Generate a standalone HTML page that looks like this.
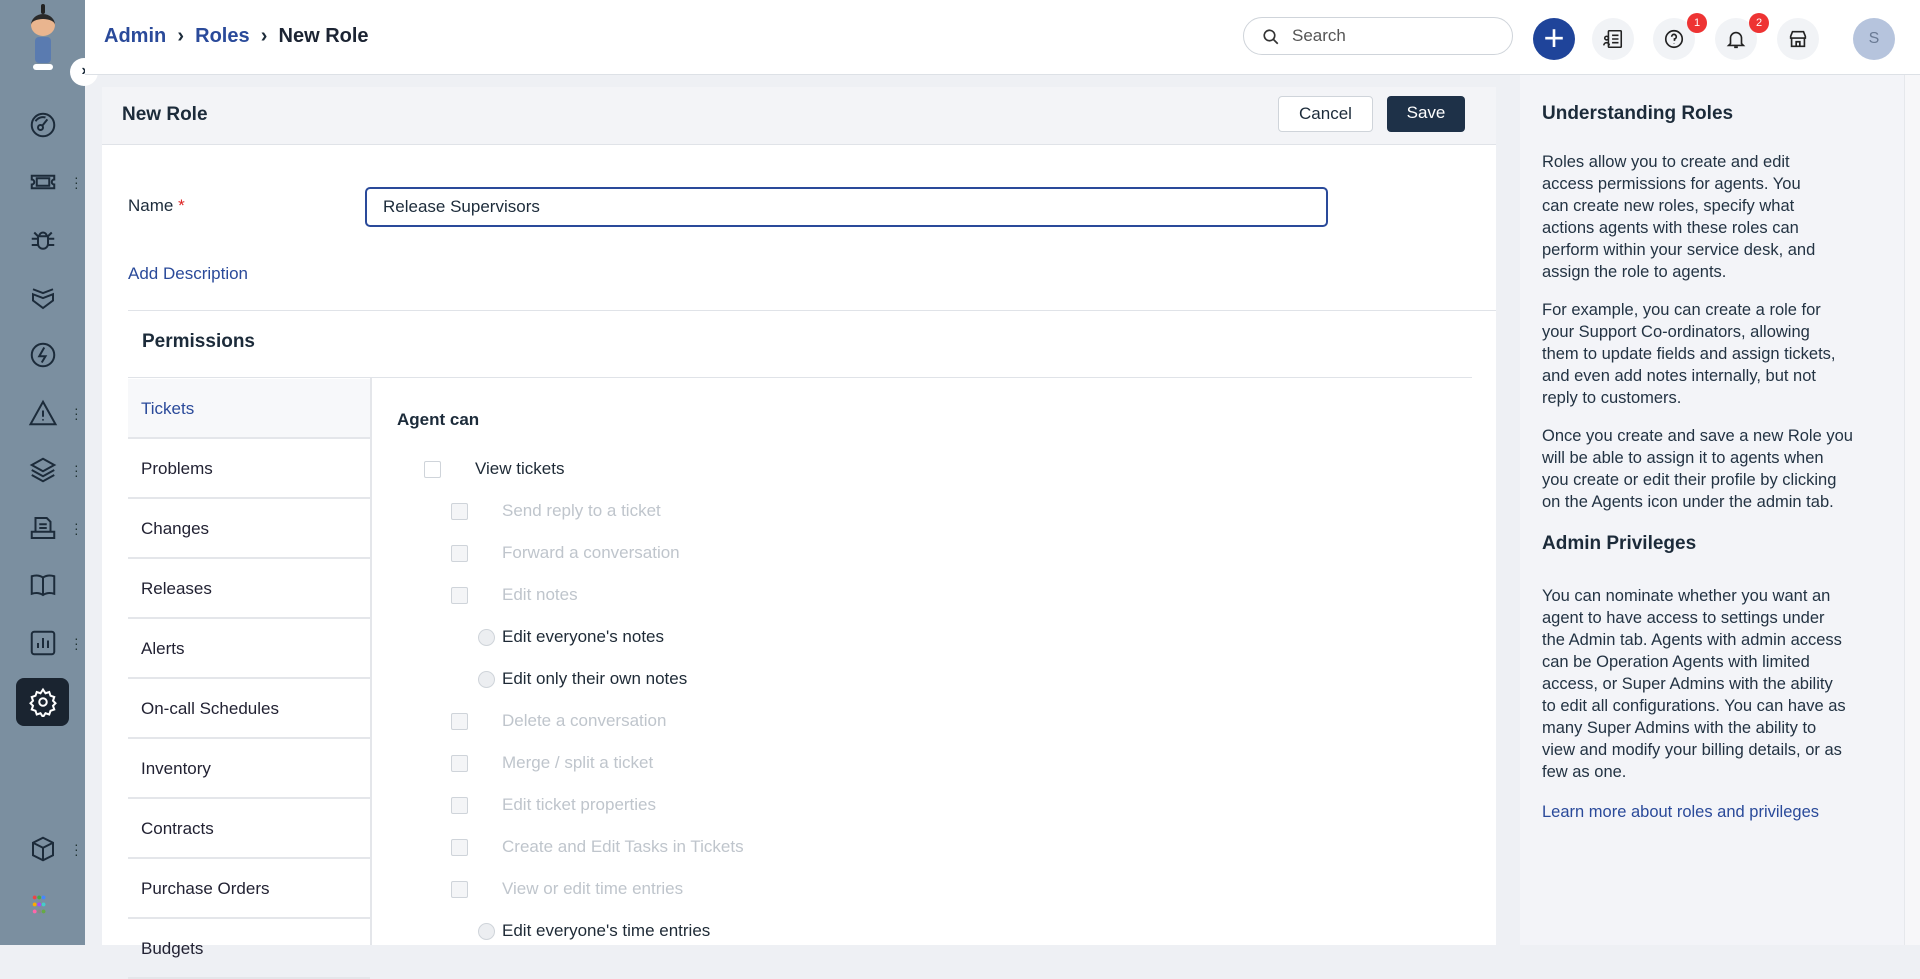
<!DOCTYPE html>
<html style="background:#eef0f4"><head><meta charset="utf-8"><style>
*{margin:0;padding:0;box-sizing:border-box}
body{width:1920px;height:945px;overflow:hidden;font-family:"Liberation Sans",sans-serif;background:#eef0f4;position:relative;color:#1c2b3a}
.a{position:absolute}
.sb{left:0;top:0;width:85px;height:945px;background:#7b8fa0}
.ic{position:absolute;left:28px;width:30px;height:30px}
.dots{position:absolute;left:74px;width:4px;height:16px;font-size:14px;color:#233;line-height:5px}
.hd{left:85px;top:0;width:1835px;height:75px;background:#fff;border-bottom:1px solid #dde1e6}
.card{left:102px;top:87px;width:1394px;height:858px;background:#fff}
.ch{left:0;top:0;width:1394px;height:58px;background:#f3f4f7;border-bottom:1px solid #e0e3e8}
.btn{position:absolute;top:9px;height:36px;border-radius:4px;font-size:17px;line-height:34px;text-align:center}
.rp{left:1520px;top:75px;width:384px;height:870px;background:#f3f4f8}
.rp p{font-size:16.5px;line-height:22px;color:#233343;margin-bottom:16px}
.tab{position:absolute;left:26px;width:242px;height:60px;border-bottom:2px solid #e4e6ea;font-size:17px;line-height:60px;padding-left:13px;color:#223}
.row{position:absolute;font-size:17px;color:#bfc5cc}
.cb{position:absolute;width:17px;height:17px;border:1px solid #cfd4da;border-radius:2px;background:#f4f5f7}
.rd{position:absolute;width:17px;height:17px;border:1px solid #cfd4da;border-radius:50%;background:#eceef1}
.hi{color:#1e2a36}
.cir{position:absolute;top:18px;width:42px;height:42px;border-radius:50%;background:#f1f3f6}
</style></head><body>
<div class="a sb">
 <div class="a" style="left:26px;top:4px;width:34px;height:74px">
  <div style="width:4px;height:10px;background:#222;margin:0 auto;border-radius:2px"></div>
  <div style="width:24px;height:22px;border-radius:50%;background:#e9b58f;margin:0 5px;border-top:5px solid #2a2a2a"></div>
  <div style="width:16px;height:26px;background:#5a7bb0;margin:1px 9px;border-radius:4px"></div>
  <div style="width:20px;height:6px;background:#fff;margin:0 7px;border-radius:3px"></div></div>
 <div class="a" style="left:70px;top:58px;width:28px;height:28px;border-radius:50%;background:#fff;font-size:16px;font-weight:bold;text-align:center;line-height:26px">›</div>
 <svg class="ic" style="top:110px" viewBox="0 0 24 24" fill="none" stroke="#1c2b3a" stroke-width="1.6"><circle cx="12" cy="12" r="9"/><circle cx="10" cy="14" r="2"/><path d="M11.5 12.5l4-5M6 9a7 7 0 0 1 8-3"/></svg>
 <svg class="ic" style="top:167px" viewBox="0 0 24 24" fill="none" stroke="#1c2b3a" stroke-width="1.6"><path d="M3 7h18v3a2 2 0 0 0 0 4v3H3v-3a2 2 0 0 0 0-4z"/><rect x="7" y="9" width="10" height="6"/></svg><div class="dots" style="top:175px">·<br>·<br>·</div>
 <svg class="ic" style="top:225px" viewBox="0 0 24 24" fill="none" stroke="#1c2b3a" stroke-width="1.6"><path d="M8 9h8v6a4 4 0 0 1-8 0zM9 9a3 3 0 0 1 6 0M3 11h5M16 11h5M3 16h5M16 16h5M5 6l3 3M19 6l-3 3"/></svg>
 <svg class="ic" style="top:283px" viewBox="0 0 24 24" fill="none" stroke="#1c2b3a" stroke-width="1.6"><path d="M4 5l8 3 8-3M4 9l8 3 8-3v5l-8 6-8-6z"/></svg>
 <svg class="ic" style="top:340px" viewBox="0 0 24 24" fill="none" stroke="#1c2b3a" stroke-width="1.6"><circle cx="12" cy="12" r="9"/><path d="M13 6l-4 7h5l-3 5"/></svg>
 <svg class="ic" style="top:398px" viewBox="0 0 24 24" fill="none" stroke="#1c2b3a" stroke-width="1.6"><path d="M12 3l10 18H2zM12 10v5M12 17v1"/></svg><div class="dots" style="top:406px">·<br>·<br>·</div>
 <svg class="ic" style="top:455px" viewBox="0 0 24 24" fill="none" stroke="#1c2b3a" stroke-width="1.6"><path d="M12 3l9 5-9 5-9-5zM3 12l9 5 9-5M3 16l9 5 9-5"/></svg><div class="dots" style="top:463px">·<br>·<br>·</div>
 <svg class="ic" style="top:513px" viewBox="0 0 24 24" fill="none" stroke="#1c2b3a" stroke-width="1.6"><path d="M6 4h9l3 3v8H6zM9 9h6M9 12h6M3 15h18v5H3z"/></svg><div class="dots" style="top:521px">·<br>·<br>·</div>
 <svg class="ic" style="top:570px" viewBox="0 0 24 24" fill="none" stroke="#1c2b3a" stroke-width="1.6"><path d="M12 6c-3-2-6-2-9-1v14c3-1 6-1 9 1 3-2 6-2 9-1V5c-3-1-6-1-9 1zM12 6v14"/></svg>
 <svg class="ic" style="top:628px" viewBox="0 0 24 24" fill="none" stroke="#1c2b3a" stroke-width="1.6"><rect x="3" y="3" width="18" height="18" rx="2"/><path d="M8 16v-4M12 16V8M16 16v-6"/></svg><div class="dots" style="top:636px">·<br>·<br>·</div>
 <div class="a" style="left:16px;top:678px;width:53px;height:48px;border-radius:8px;background:#1a2430"></div>
 <svg class="ic" style="top:687px" viewBox="0 0 24 24" fill="none" stroke="#fff" stroke-width="1.6"><circle cx="12" cy="12" r="3"/><path d="M12 2l2 3 3-1 1 3 3 1-1 3 2 2-2 2 1 3-3 1-1 3-3-1-2 3-2-3-3 1-1-3-3-1 1-3-2-2 2-2-1-3 3-1 1-3 3 1z"/></svg>
 <svg class="ic" style="top:834px" viewBox="0 0 24 24" fill="none" stroke="#1c2b3a" stroke-width="1.6"><path d="M12 3l8 4v10l-8 4-8-4V7zM4 7l8 4 8-4M12 11v10"/></svg><div class="dots" style="top:842px">·<br>·<br>·</div>
 <div class="a" style="left:32px;top:894px;width:22px;height:22px;font-size:9px;line-height:7px;letter-spacing:-1px"><span style="color:#e44">●</span><span style="color:#4a4">●</span><span style="color:#48f">●</span><br><span style="color:#fa0">●</span><span style="color:#a4f">●</span><span style="color:#4cc">●</span><br><span style="color:#f6a">●</span><span style="color:#888">●</span><span style="color:#6a4">●</span></div>
</div>
<div class="a hd">
 <div class="a" style="left:19px;top:25px;font-size:20px;font-weight:bold;white-space:nowrap"><span style="color:#2a4a9a">Admin</span>&nbsp; <span style="font-size:20px">›</span>&nbsp; <span style="color:#2a4a9a">Roles</span>&nbsp; <span style="font-size:20px">›</span>&nbsp; <span style="color:#1c2433">New Role</span></div>
 <div class="a" style="left:1158px;top:17px;width:270px;height:38px;border:1px solid #cfd4da;border-radius:19px;font-size:17px;color:#555;line-height:36px;padding-left:48px">Search
  <svg style="position:absolute;left:18px;top:10px" width="18" height="18" viewBox="0 0 24 24" fill="none" stroke="#333" stroke-width="2.2"><circle cx="10" cy="10" r="7"/><path d="M15 15l6 6"/></svg></div>
 <div class="a" style="left:1448px;top:18px;width:42px;height:42px;border-radius:50%;background:#1f449a;color:#fff;font-size:36px;line-height:40px;text-align:center;font-weight:300">+</div>
 <div class="cir" style="left:1507px"><svg style="margin:10px" width="22" height="22" viewBox="0 0 24 24" fill="none" stroke="#222" stroke-width="1.7"><rect x="7" y="3" width="14" height="18" rx="1"/><path d="M11 8h7M11 12h7M11 16h7"/><circle cx="5" cy="11" r="2"/><path d="M2 19a3 3 0 0 1 6 0"/></svg></div>
 <div class="cir" style="left:1568px"><svg style="margin:10px" width="22" height="22" viewBox="0 0 24 24" fill="none" stroke="#222" stroke-width="1.8"><circle cx="12" cy="12" r="9"/><path d="M9.5 9.5a2.5 2.5 0 1 1 3 2.4V14M12 17v.5"/></svg></div>
 <div class="a" style="left:1602px;top:13px;width:20px;height:20px;border-radius:50%;background:#e33;color:#fff;font-size:11px;text-align:center;line-height:20px">1</div>
 <div class="cir" style="left:1630px"><svg style="margin:10px" width="22" height="22" viewBox="0 0 24 24" fill="none" stroke="#222" stroke-width="1.8"><path d="M6 17V11a6 6 0 0 1 12 0v6l2 2H4zM10 21h4"/></svg></div>
 <div class="a" style="left:1664px;top:13px;width:20px;height:20px;border-radius:50%;background:#e33;color:#fff;font-size:11px;text-align:center;line-height:20px">2</div>
 <div class="cir" style="left:1692px"><svg style="margin:10px" width="22" height="22" viewBox="0 0 24 24" fill="none" stroke="#222" stroke-width="1.8"><path d="M4 9l2-5h12l2 5v2H4zM5 11v9h14v-9M10 20v-5h4v5"/></svg></div>
 <div class="a" style="left:1768px;top:18px;width:42px;height:42px;border-radius:50%;background:#b6c4dd;color:#6a7a94;font-size:16px;text-align:center;line-height:42px">S</div>
</div>
<div class="a card">
 <div class="a ch"><div class="a" style="left:20px;top:17px;font-size:19px;font-weight:bold">New Role</div>
  <div class="btn" style="left:1176px;width:95px;background:#fff;border:1px solid #cfd4da">Cancel</div>
  <div class="btn" style="left:1285px;width:78px;background:#1e3148;color:#fff">Save</div></div>
 <div class="a" style="left:26px;top:109px;font-size:17px">Name <span style="color:#d22">*</span></div>
 <div class="a" style="left:263px;top:100px;width:963px;height:40px;border:2px solid #2a4a9a;border-radius:5px;font-size:17px;line-height:36px;padding-left:16px">Release Supervisors</div>
 <div class="a" style="left:26px;top:177px;font-size:17px;color:#2a4a9a">Add Description</div>
 <div class="a" style="left:26px;top:223px;width:1368px;height:1px;background:#e0e3e8"></div>
 <div class="a" style="left:40px;top:244px;font-size:19px;font-weight:bold">Permissions</div>
 <div class="a" style="left:26px;top:290px;width:1344px;height:1px;background:#e0e3e8"></div>
 <div class="a" style="left:268px;top:291px;width:2px;height:567px;background:#e4e6ea"></div>
 <div class="tab" style="top:292px;color:#2a4a9a;background:#f7f8fa">Tickets</div>
 <div class="tab" style="top:352px">Problems</div>
 <div class="tab" style="top:412px">Changes</div>
 <div class="tab" style="top:472px">Releases</div>
 <div class="tab" style="top:532px">Alerts</div>
 <div class="tab" style="top:592px">On-call Schedules</div>
 <div class="tab" style="top:652px">Inventory</div>
 <div class="tab" style="top:712px">Contracts</div>
 <div class="tab" style="top:772px">Purchase Orders</div>
 <div class="tab" style="top:832px">Budgets</div>
 <div class="a" style="left:295px;top:323px;font-size:17px;font-weight:bold">Agent can</div>
 <div class="cb" style="left:322px;top:374px;background:#fff"></div><div class="row hi" style="left:373px;top:372px">View tickets</div>
 <div class="cb" style="left:349px;top:416px"></div><div class="row" style="left:400px;top:414px">Send reply to a ticket</div>
 <div class="cb" style="left:349px;top:458px"></div><div class="row" style="left:400px;top:456px">Forward a conversation</div>
 <div class="cb" style="left:349px;top:500px"></div><div class="row" style="left:400px;top:498px">Edit notes</div>
 <div class="rd" style="left:376px;top:542px"></div><div class="row hi" style="left:400px;top:540px">Edit everyone's notes</div>
 <div class="rd" style="left:376px;top:584px"></div><div class="row hi" style="left:400px;top:582px">Edit only their own notes</div>
 <div class="cb" style="left:349px;top:626px"></div><div class="row" style="left:400px;top:624px">Delete a conversation</div>
 <div class="cb" style="left:349px;top:668px"></div><div class="row" style="left:400px;top:666px">Merge / split a ticket</div>
 <div class="cb" style="left:349px;top:710px"></div><div class="row" style="left:400px;top:708px">Edit ticket properties</div>
 <div class="cb" style="left:349px;top:752px"></div><div class="row" style="left:400px;top:750px">Create and Edit Tasks in Tickets</div>
 <div class="cb" style="left:349px;top:794px"></div><div class="row" style="left:400px;top:792px">View or edit time entries</div>
 <div class="rd" style="left:376px;top:836px"></div><div class="row hi" style="left:400px;top:834px">Edit everyone's time entries</div>
</div>
<div class="a rp"><div style="padding:28px 0 0 22px;width:352px">
 <div style="font-size:19px;font-weight:bold;margin-bottom:26px">Understanding Roles</div>
 <p>Roles allow you to create and edit<br>access permissions for agents. You<br>can create new roles, specify what<br>actions agents with these roles can<br>perform within your service desk, and<br>assign the role to agents.</p>
 <p>For example, you can create a role for<br>your Support Co-ordinators, allowing<br>them to update fields and assign tickets,<br>and even add notes internally, but not<br>reply to customers.</p>
 <p style="margin-bottom:20px">Once you create and save a new Role you<br>will be able to assign it to agents when<br>you create or edit their profile by clicking<br>on the Agents icon under the admin tab.</p>
 <div style="font-size:19px;font-weight:bold;margin:0 0 30px">Admin Privileges</div>
 <p>You can nominate whether you want an<br>agent to have access to settings under<br>the Admin tab. Agents with admin access<br>can be Operation Agents with limited<br>access, or Super Admins with the ability<br>to edit all configurations. You can have as<br>many Super Admins with the ability to<br>view and modify your billing details, or as<br>few as one.</p>
 <p style="color:#2a4a9a;margin-top:18px">Learn more about roles and privileges</p>
</div></div>
<div class="a" style="left:1904px;top:75px;width:16px;height:870px;background:#f7f7f9;border-left:1px solid #e6e8ec"></div>
</body></html>
